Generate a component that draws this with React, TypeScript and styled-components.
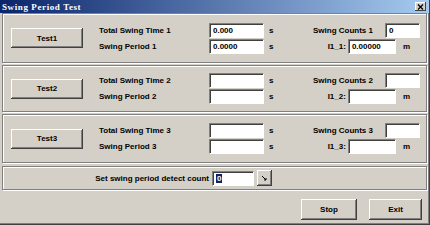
import React from 'react'
import styled, { createGlobalStyle } from 'styled-components';

const Global = createGlobalStyle`
html, body {
  margin: 0;
  padding: 0;
  background: #d4d0c8;
}
body {
  font-family: "Liberation Sans", Arial, sans-serif;
}
`

const Window = styled.div`
width: 430px;
height: 225px;
box-sizing: border-box;
display: flex;
flex-flow: column;
background: #d4d0c8;
border-right: 1px solid #404040;
border-bottom: 1px solid #404040;
box-shadow: inset -1px -1px #808080;
overflow: hidden;
`

const TitleBar = styled.div`
height: 13px;
flex-shrink: 0;
display: flex;
align-items: center;
justify-content: space-between;
padding: 0 3px 0 2px;
background: linear-gradient(to right, #0a246a, #a6caf0);
`

const Title = styled.span`
color: #fff;
font-family: "Liberation Serif", "Times New Roman", serif;
font-weight: bold;
font-size: 9px;
letter-spacing: 0.6px;
`

const CloseBox = styled.div`
width: 11px;
height: 9px;
box-sizing: border-box;
display: flex;
align-items: center;
justify-content: center;
background: #d4d0c8;
box-shadow: inset -1px -1px #404040, inset 1px 1px #fff;
`

const Body = styled.div`
flex: 1;
display: flex;
flex-flow: column;
padding: 0 2px 0 2px;
`

const Group = styled.div<{ $h: number; $gap: number }>`
height: ${({ $h }) => $h}px;
margin-top: ${({ $gap }) => $gap}px;
box-sizing: border-box;
display: flex;
align-items: center;
border: 1px solid #808080;
box-shadow: inset 1px 1px #fff, 1px 1px #fff;
`

const ButtonCell = styled.div`
width: 96px;
padding-left: 8px;
box-sizing: border-box;
flex-shrink: 0;
`

const Button = styled.div<{ $w: number; $h: number }>`
width: ${({ $w }) => $w}px;
height: ${({ $h }) => $h}px;
box-sizing: border-box;
display: flex;
align-items: center;
justify-content: center;
background: #d4d0c8;
font-size: 8px;
font-weight: bold;
color: #000;
box-shadow: inset -1px -1px #404040, inset 1px 1px #fff, inset -2px -2px #808080;
`

const Fields = styled.div`
display: grid;
grid-template-columns: 110px 55px 24px;
row-gap: 1px;
align-items: center;
`

const Label = styled.span`
font-size: 8px;
font-weight: bold;
color: #000;
white-space: nowrap;
`

const Unit = styled.span`
font-size: 8px;
font-weight: bold;
padding-left: 5px;
`

const Field = styled.div<{ $w: number }>`
width: ${({ $w }) => $w}px;
height: 15px;
box-sizing: border-box;
display: flex;
align-items: center;
padding-left: 3px;
background: #fff;
font-size: 8px;
font-weight: bold;
color: #000;
border: 1px solid;
border-color: #808080 #fff #fff #808080;
box-shadow: inset 1px 1px #404040;
`

const Right = styled.div`
flex: 1;
display: flex;
flex-flow: column;
row-gap: 1px;
`

const RightRow = styled.div<{ $pad: number; $gap: number }>`
display: flex;
align-items: center;
justify-content: flex-end;
column-gap: ${({ $gap }) => $gap}px;
padding-right: ${({ $pad }) => $pad}px;
`

const DetectRow = styled.div`
flex: 1;
display: flex;
align-items: center;
padding-left: 4px;
column-gap: 3px;
`

const DetectLabel = styled(Label)`
width: 202px;
text-align: right;
`

const Selected = styled.span`
background: #0a246a;
color: #fff;
padding: 0 1px;
`

const Footer = styled.div`
flex: 1;
display: flex;
align-items: flex-start;
justify-content: flex-end;
padding: 9px 5px 0 0;
column-gap: 12px;
`

type SwingProps = {
    n: number;
    h: number;
    gap: number;
    total?: string;
    period?: string;
    counts?: string;
    l1?: string;
}

const SwingGroup = ({ n, h, gap, total, period, counts, l1 }: SwingProps) => (
    <Group $h={h} $gap={gap}>
        <ButtonCell>
            <Button $w={72} $h={20}>Test{n}</Button>
        </ButtonCell>
        <Fields>
            <Label>Total Swing Time {n}</Label>
            <Field $w={55}>{total}</Field>
            <Unit>s</Unit>
            <Label>Swing Period {n}</Label>
            <Field $w={55}>{period}</Field>
            <Unit>s</Unit>
        </Fields>
        <Right>
            <RightRow $pad={6} $gap={12}>
                <Label>Swing Counts {n}</Label>
                <Field $w={35}>{counts}</Field>
            </RightRow>
            <RightRow $pad={16} $gap={2}>
                <Label>I1_{n}:</Label>
                <Field $w={48}>{l1}</Field>
                <Unit>m</Unit>
            </RightRow>
        </Right>
    </Group>
)

const App = () => (
    <Window>
        <Global />
        <TitleBar>
            <Title>Swing Period Test</Title>
            <CloseBox>
                <svg width="7" height="6" viewBox="0 0 7 6">
                    <path d="M1 0.5 L6 5.5 M6 0.5 L1 5.5" stroke="#000" strokeWidth="1.3" />
                </svg>
            </CloseBox>
        </TitleBar>
        <Body>
            <SwingGroup n={1} h={50} gap={0} total="0.000" period="0.0000" counts="0" l1="0.00000" />
            <SwingGroup n={2} h={47} gap={2} />
            <SwingGroup n={3} h={49} gap={2} />
            <Group $h={24} $gap={3}>
                <DetectRow>
                    <DetectLabel>Set swing period detect count</DetectLabel>
                    <Field $w={42}><Selected>0</Selected></Field>
                    <Button $w={15} $h={16}>
                        <svg width="7" height="7" viewBox="0 0 7 7">
                            <path d="M1 1 L5 5 M5 3 L5 5 L3 5" stroke="#000" strokeWidth="1" fill="none" />
                        </svg>
                    </Button>
                </DetectRow>
            </Group>
            <Footer>
                <Button $w={56} $h={21}>Stop</Button>
                <Button $w={53} $h={21}>Exit</Button>
            </Footer>
        </Body>
    </Window>
)

export default App;
